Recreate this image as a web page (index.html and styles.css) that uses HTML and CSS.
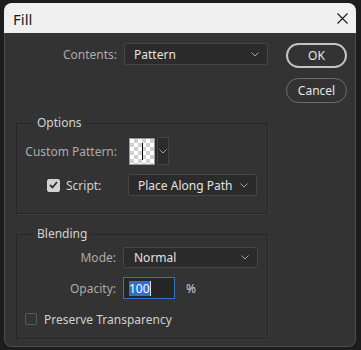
FILE: index.html
```html
<!DOCTYPE html>
<html lang="en">
<head>
  <meta charset="UTF-8">
  <meta name="viewport" content="width=device-width, initial-scale=1">
  <title>Fill</title>
  <link rel="stylesheet" href="styles.css">
</head>
<body>

  <div class="dialog">
    <div class="titlebar">
      <span class="title">Fill</span>
      <svg class="close" width="11" height="11" viewBox="0 0 11 11"><path d="M0.5 0.5 L10.5 10.5 M10.5 0.5 L0.5 10.5" stroke="#1a1a1a" stroke-width="1.1" fill="none"/></svg>
    </div>

    <div class="body">
      <div class="main">
        <div class="row contents-row">
          <span class="label">Contents:</span>
          <div class="select contents-select">
            <span>Pattern</span>
            <svg class="chev" width="8" height="5" viewBox="0 0 8 5"><path d="M0.5 0.5 L4 4 L7.5 0.5" stroke="#a0a0a0" fill="none"/></svg>
          </div>
        </div>

        <fieldset class="group options">
          <legend>Options</legend>
          <div class="row pattern-row">
            <span class="label">Custom Pattern:</span>
            <div class="pattern-pick">
              <div class="swatch"><span class="caret"></span></div>
              <div class="pattern-arrow">
                <svg width="8" height="5" viewBox="0 0 8 5"><path d="M0.5 0.5 L4 4 L7.5 0.5" stroke="#a0a0a0" fill="none"/></svg>
              </div>
            </div>
          </div>
          <div class="row script-row">
            <div class="check-label">
              <span class="checkbox checked">
                <svg width="9" height="8" viewBox="0 0 9 8"><path d="M1 4 L3.5 6.5 L8 1" stroke="#2e2e2e" stroke-width="1.8" fill="none"/></svg>
              </span>
              <span class="check-text">Script:</span>
            </div>
            <div class="select script-select">
              <span>Place Along Path</span>
              <svg class="chev" width="8" height="5" viewBox="0 0 8 5"><path d="M0.5 0.5 L4 4 L7.5 0.5" stroke="#a0a0a0" fill="none"/></svg>
            </div>
          </div>
        </fieldset>

        <fieldset class="group blending">
          <legend>Blending</legend>
          <div class="row mode-row">
            <span class="label short">Mode:</span>
            <div class="select mode-select">
              <span>Normal</span>
              <svg class="chev" width="8" height="5" viewBox="0 0 8 5"><path d="M0.5 0.5 L4 4 L7.5 0.5" stroke="#a0a0a0" fill="none"/></svg>
            </div>
          </div>
          <div class="row opacity-row">
            <span class="label short">Opacity:</span>
            <div class="text-input"><span class="selected">100</span><span class="text-caret"></span></div>
            <span class="unit">%</span>
          </div>
          <div class="row preserve-row">
            <span class="checkbox"></span>
            <span class="check-text">Preserve Transparency</span>
          </div>
        </fieldset>
      </div>

      <div class="buttons">
        <button class="btn default">OK</button>
        <button class="btn">Cancel</button>
      </div>
    </div>
  </div>

</body>
</html>
```

FILE: styles.css
```css
body {
  margin: 0;
  background-color: #1d1d1d;
  font-family: "Noto Sans", "Open Sans", sans-serif;
  font-size: 12px;
  color: #d6d6d6;
}
.dialog {
  margin: 3px 0 0 4px;
  width: 352px;
  height: 344px;
  display: flex;
  flex-direction: column;
  border-radius: 8px;
  overflow: hidden;
  background-color: #333333;
  box-shadow: inset 0 0 0 1px #4c4c4c;
}
.titlebar {
  height: 30px;
  flex: none;
  background-color: #f0f0f0;
  display: flex;
  align-items: center;
  justify-content: space-between;
  padding: 0 8px 0 9px;
  color: #1a1a1a;
}
.title {
  font-size: 15px;
  margin-top: 1px;
}
.close {
  margin-top: 1px;
}
.body {
  display: flex;
  padding: 10px 0 0 12px;
}
.main {
  width: 252px;
}
.row {
  display: flex;
  align-items: center;
}
.label {
  width: 101px;
  text-align: right;
  color: #acacac;
  flex: none;
}
.contents-row {
  height: 22px;
}
.select {
  display: flex;
  align-items: center;
  justify-content: space-between;
  box-sizing: border-box;
  height: 22px;
  padding: 0 8px 0 9px;
  background-color: #2b2b2b;
  border: 1px solid #464646;
  border-radius: 2px;
  color: #e2e2e2;
}
.contents-select {
  margin-left: 7px;
  width: 144px;
}
.group {
  margin: 0;
  padding: 0;
  width: 252px;
  box-sizing: border-box;
  border: 1px solid #262626;
  box-shadow: 1px 1px 0 #3c3c3c;
}
.group legend {
  padding: 0 4px;
  margin-left: 16px;
  line-height: 16px;
  color: #d2d2d2;
}
.options {
  margin-top: 50px;
  padding-top: 6px;
  padding-bottom: 17px;
}
.options .label {
  width: 100px;
}
.pattern-row {
  height: 28px;
}
.pattern-pick {
  margin-left: 12px;
  display: flex;
  height: 28px;
  background-color: #2b2b2b;
}
.swatch {
  width: 24px;
  height: 25px;
  margin-top: 1px;
  border: 1px solid #9a9a9a;
  background: repeating-conic-gradient(#d0d0d0 0 25%, #ffffff 0 50%) 0 0 / 8px 8px;
  display: flex;
  align-items: center;
  justify-content: center;
}
.caret {
  width: 1px;
  height: 17px;
  background-color: #000;
}
.pattern-arrow {
  margin-left: 2px;
  width: 12px;
  box-sizing: border-box;
  border: 1px solid #444;
  display: flex;
  align-items: center;
  justify-content: center;
}
.script-row {
  margin-top: 9px;
  height: 22px;
}
.check-label {
  width: 111px;
  flex: none;
  box-sizing: border-box;
  padding-left: 30px;
  display: flex;
  align-items: center;
}
.checkbox {
  width: 13px;
  height: 13px;
  box-sizing: border-box;
  border: 1px solid #5a5a5a;
  border-radius: 2px;
  display: flex;
  align-items: center;
  justify-content: center;
  flex: none;
}
.checkbox.checked {
  background-color: #d2d2d2;
  border-color: #d2d2d2;
}
.check-text {
  margin-left: 6px;
  color: #d0d0d0;
}
.script-select {
  width: 129px;
}
.blending {
  margin-top: 12px;
  padding-top: 5px;
  padding-bottom: 13px;
}
.short {
  width: 99px;
}
.mode-row {
  height: 21px;
}
.mode-select {
  height: 21px;
  margin-left: 7px;
  width: 135px;
  padding-left: 10px;
}
.opacity-row {
  margin-top: 9px;
  height: 22px;
}
.text-input {
  margin-left: 7px;
  width: 52px;
  height: 22px;
  box-sizing: border-box;
  border: 1px solid #2f72c4;
  background-color: #262626;
  padding-left: 5px;
  display: flex;
  align-items: center;
}
.selected {
  background-color: #2f6fd0;
  color: #ffffff;
  line-height: 15px;
}
.text-caret {
  width: 1px;
  height: 15px;
  background-color: #e0e0e0;
}
.unit {
  margin-left: 11px;
  color: #d0d0d0;
}
.preserve-row {
  margin-top: 14px;
  height: 12px;
  padding-left: 8px;
}
.preserve-row .checkbox {
  width: 12px;
  height: 12px;
}
.preserve-row .check-text {
  margin-left: 7px;
}
.buttons {
  margin-left: 18px;
  display: flex;
  flex-direction: column;
  gap: 10px;
}
.btn {
  width: 61px;
  height: 25px;
  box-sizing: border-box;
  border-radius: 13px;
  border: 1px solid #6c6c6c;
  background-color: #333333;
  color: #e6e6e6;
  font-family: "Noto Sans", "Open Sans", sans-serif;
  font-size: 12px;
  padding: 0;
}
.btn.default {
  border: 2px solid #c4c4c4;
}
```
